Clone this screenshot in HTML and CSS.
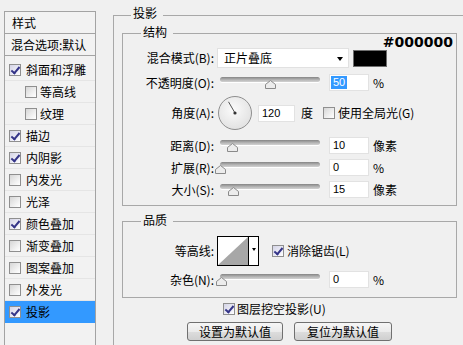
FILE: index.html
```html
<!DOCTYPE html>
<html lang="zh-CN">
<head>
<meta charset="utf-8">
<title>图层样式 - 投影</title>
<link rel="stylesheet" href="styles.css">
</head>
<body>
<div class="dialog">
  <aside class="styles-panel">
    <div class="panel-head">样式</div>
    <div class="panel-head blend">混合选项:默认</div>
    <ul class="fx-list">
      <li class="fx"><span class="cb on"></span><span class="fx-name">斜面和浮雕</span></li>
      <li class="fx sub"><span class="cb"></span><span class="fx-name">等高线</span></li>
      <li class="fx sub"><span class="cb"></span><span class="fx-name">纹理</span></li>
      <li class="fx"><span class="cb on"></span><span class="fx-name">描边</span></li>
      <li class="fx"><span class="cb on"></span><span class="fx-name">内阴影</span></li>
      <li class="fx"><span class="cb"></span><span class="fx-name">内发光</span></li>
      <li class="fx"><span class="cb"></span><span class="fx-name">光泽</span></li>
      <li class="fx"><span class="cb on"></span><span class="fx-name">颜色叠加</span></li>
      <li class="fx"><span class="cb"></span><span class="fx-name">渐变叠加</span></li>
      <li class="fx"><span class="cb"></span><span class="fx-name">图案叠加</span></li>
      <li class="fx"><span class="cb"></span><span class="fx-name">外发光</span></li>
      <li class="fx selected"><span class="cb on"></span><span class="fx-name">投影</span></li>
    </ul>
  </aside>

  <main class="content">
    <section class="group outer">
      <h2 class="legend">投影</h2>

      <section class="group inner structure">
        <h3 class="legend">结构</h3>
        <div class="hex">#000000</div>

        <div class="row r-blend">
          <span class="lbl">混合模式(B):</span>
          <div class="select"><span>正片叠底</span><span class="arrow"></span></div>
          <span class="swatch"></span>
        </div>

        <div class="row r-opacity">
          <span class="lbl">不透明度(O):</span>
          <div class="slider"><div class="track"></div><svg class="thumb" style="left:50px" width="11" height="9" viewBox="0 0 11 9"><path d="M0.5 8.5V4.5L5.5 0.5L10.5 4.5V8.5Z" fill="#ececec" stroke="#8a8a8a"/></svg></div>
          <span class="num"><span class="sel">50</span></span>
          <span class="unit">%</span>
        </div>

        <div class="row r-angle">
          <span class="lbl">角度(A):</span>
          <svg class="dial" width="34" height="34" viewBox="0 0 34 34">
            <defs>
              <radialGradient id="dg" cx="45%" cy="40%" r="60%">
                <stop offset="0" stop-color="#fbfbfb"/>
                <stop offset="1" stop-color="#e2e2e2"/>
              </radialGradient>
            </defs>
            <circle cx="17" cy="17" r="16.5" fill="url(#dg)" stroke="#8e8e8e"/>
            <line x1="17" y1="17" x2="10.5" y2="5.8" stroke="#555" stroke-width="1"/>
            <circle cx="17" cy="17" r="1.6" fill="#333"/>
          </svg>
          <span class="num angle">120</span>
          <span class="unit deg">度</span>
          <span class="cb global"></span>
          <span class="cb-text">使用全局光(G)</span>
        </div>

        <div class="row r-distance">
          <span class="lbl">距离(D):</span>
          <div class="slider"><div class="track"></div><svg class="thumb" style="left:12px" width="11" height="9" viewBox="0 0 11 9"><path d="M0.5 8.5V4.5L5.5 0.5L10.5 4.5V8.5Z" fill="#ececec" stroke="#8a8a8a"/></svg></div>
          <span class="num">10</span>
          <span class="unit">像素</span>
        </div>

        <div class="row r-spread">
          <span class="lbl">扩展(R):</span>
          <div class="slider"><div class="track"></div><svg class="thumb" style="left:0px" width="11" height="9" viewBox="0 0 11 9"><path d="M0.5 8.5V4.5L5.5 0.5L10.5 4.5V8.5Z" fill="#ececec" stroke="#8a8a8a"/></svg></div>
          <span class="num">0</span>
          <span class="unit">%</span>
        </div>

        <div class="row r-size">
          <span class="lbl">大小(S):</span>
          <div class="slider"><div class="track"></div><svg class="thumb" style="left:13px" width="11" height="9" viewBox="0 0 11 9"><path d="M0.5 8.5V4.5L5.5 0.5L10.5 4.5V8.5Z" fill="#ececec" stroke="#8a8a8a"/></svg></div>
          <span class="num">15</span>
          <span class="unit">像素</span>
        </div>
      </section>

      <section class="group inner quality">
        <h3 class="legend">品质</h3>

        <div class="row r-contour">
          <span class="lbl">等高线:</span>
          <div class="contour">
            <svg class="curve" width="30" height="28" viewBox="0 0 30 28"><polygon points="0,28 30,0 30,28" fill="#a7a7a7"/></svg>
            <span class="contour-drop"><span class="mini-arrow"></span></span>
          </div>
          <span class="cb on aa"></span>
          <span class="cb-text">消除锯齿(L)</span>
        </div>

        <div class="row r-noise">
          <span class="lbl">杂色(N):</span>
          <div class="slider"><div class="track"></div><svg class="thumb" style="left:1px" width="11" height="9" viewBox="0 0 11 9"><path d="M0.5 8.5V4.5L5.5 0.5L10.5 4.5V8.5Z" fill="#ececec" stroke="#8a8a8a"/></svg></div>
          <span class="num">0</span>
          <span class="unit">%</span>
        </div>
      </section>

      <div class="row r-knockout">
        <span class="cb on"></span>
        <span class="cb-text">图层挖空投影(U)</span>
      </div>

      <div class="buttons">
        <button class="btn btn-set">设置为默认值</button>
        <button class="btn btn-reset">复位为默认值</button>
      </div>
    </section>
  </main>
</div>
</body>
</html>
```
FILE: styles.css
```css
* { box-sizing: border-box; }

html, body {
  margin: 0;
  padding: 0;
}

body {
  width: 463px;
  height: 345px;
  overflow: hidden;
  background: #f0f0f0;
  color: #000;
  font-family: "Noto Sans CJK SC", "Noto Sans", sans-serif;
  font-size: 12px;
  line-height: 16px;
}

.dialog {
  display: flex;
  align-items: flex-start;
}

/* ---------- left panel ---------- */
.styles-panel {
  flex: none;
  width: 92px;
  height: 334px;
  margin: 11px 0 0 4px;
  border: 1px solid #a3a3a3;
  border-bottom: none;
  background: #f2f2f2;
}

.panel-head {
  height: 22px;
  display: flex;
  align-items: center;
  padding-left: 7px;
  border-bottom: 1px solid #a3a3a3;
}

.panel-head.blend {
  padding-left: 6px;
}

.fx-list {
  list-style: none;
  margin: 0;
  padding: 3px 0 0;
}

.fx {
  height: 22px;
  display: flex;
  align-items: center;
  padding-left: 4px;
  border-bottom: 1px solid #e5e5e5;
}

.fx .fx-name {
  margin-left: 5px;
}

.fx.sub {
  padding-left: 20px;
}

.fx.sub .fx-name {
  margin-left: 3px;
}

.fx.selected {
  background: #3399ff;
  border-bottom-color: #3399ff;
}

/* ---------- checkbox ---------- */
.cb {
  flex: none;
  position: relative;
  width: 12px;
  height: 12px;
  border: 1px solid #8f8f8f;
  background: linear-gradient(135deg, #d6d6d6 0%, #f4f4f4 70%, #ffffff 100%);
}

.cb.on {
  background: linear-gradient(135deg, #d4d4e6 0%, #f0f0f8 70%, #ffffff 100%);
}

.cb.on::after {
  content: "";
  position: absolute;
  left: 3px;
  top: 0px;
  width: 3px;
  height: 7px;
  border-right: 2px solid #343488;
  border-bottom: 2px solid #343488;
  transform: rotate(40deg);
}

.cb-text {
  margin-left: 3px;
  white-space: nowrap;
}

/* ---------- right content ---------- */
.content {
  flex: none;
  margin-left: 17px;
  margin-top: 15px;
}

.group {
  border: 1px solid #a8a8a8;
}

.group.outer {
  width: 350px;
  height: 330px;
  padding-left: 8px;
  border-bottom: none;
  border-right: none;
}

.legend {
  display: block;
  width: fit-content;
  height: 16px;
  margin: 0;
  padding: 0 6px 0 2px;
  font-size: 12px;
  font-weight: normal;
  line-height: 16px;
  background: #f0f0f0;
}

.outer > .legend {
  margin-top: -11px;
  margin-left: 9px;
}

.inner {
  width: 335px;
  position: relative;
}

.inner > .legend {
  margin-top: -10px;
  margin-left: 18px;
}

.structure {
  margin-top: 12px;
  padding-bottom: 7px;
}

.quality {
  margin-top: 15px;
  padding-bottom: 9px;
}

.hex {
  position: absolute;
  top: 1px;
  right: 3px;
  font-family: "DejaVu Sans", sans-serif;
  font-weight: bold;
  font-size: 14px;
  line-height: 14px;
}

.row {
  display: flex;
  align-items: center;
  white-space: nowrap;
}

.lbl {
  flex: none;
  width: 91px;
  text-align: right;
}

.r-blend   { margin-top: 8px; height: 20px; }
.r-opacity { margin-top: 6px; height: 17px; }
.r-angle   { margin-top: 5px; height: 34px; }
.r-distance{ margin-top: 7px; height: 17px; }
.r-spread  { margin-top: 5px; height: 17px; }
.r-size    { margin-top: 5px; height: 17px; }
.r-contour { margin-top: 8px; height: 30px; }
.r-noise   { margin-top: 5px; height: 17px; }

.select {
  flex: none;
  width: 132px;
  height: 20px;
  margin-left: 3px;
  padding: 0 5px 0 6px;
  display: flex;
  align-items: center;
  justify-content: space-between;
  background: #fff;
  border: 1px solid #e1e1e1;
}

.arrow {
  width: 0;
  height: 0;
  border-left: 3.5px solid transparent;
  border-right: 3.5px solid transparent;
  border-top: 4px solid #000;
  margin-top: 1px;
}

.swatch {
  flex: none;
  width: 34px;
  height: 17px;
  margin-left: 4px;
  background: #000;
  border: 1px solid #6e6e6e;
}

.slider {
  flex: none;
  position: relative;
  width: 106px;
  height: 13px;
  margin-left: 1px;
  padding-top: 1px;
}

.track {
  width: 100px;
  height: 5px;
  margin-left: 5px;
  border-radius: 3px;
  background: linear-gradient(#858585, #b9b9b9 60%, #d2d2d2);
  box-shadow: 0 1px 0 #ffffff;
}

.thumb {
  position: absolute;
  top: 4px;
  display: block;
}

.num {
  flex: none;
  width: 40px;
  height: 17px;
  margin-left: 8px;
  padding-left: 3px;
  background: #fff;
  border: 1px solid #e2e2e2;
  font-family: "Liberation Sans", Arial, sans-serif;
  font-size: 11px;
  line-height: 15px;
}

.sel {
  display: inline-block;
  margin-left: -2px;
  padding: 0 2px;
  background: #3399ff;
  color: #fff;
  line-height: 13px;
}

.unit {
  margin-left: 4px;
}

.dial {
  flex: none;
  margin-left: 4px;
  display: block;
}

.num.angle {
  width: 37px;
  margin-left: 6px;
}

.unit.deg {
  margin-left: 6px;
}

.cb.global {
  margin-left: 10px;
}

.contour {
  flex: none;
  display: flex;
  width: 42px;
  height: 30px;
  margin-left: 3px;
  border: 1px solid #000;
  background: #fff;
}

.curve {
  display: block;
}

.contour-drop {
  flex: none;
  width: 10px;
  border-left: 1px solid #000;
  display: flex;
  align-items: center;
  justify-content: center;
}

.mini-arrow {
  width: 0;
  height: 0;
  border-left: 2.5px solid transparent;
  border-right: 2.5px solid transparent;
  border-top: 3px solid #000;
  margin-top: -4px;
}

.cb.aa {
  margin-left: 13px;
}

.r-knockout {
  margin-top: 2px;
  height: 17px;
  padding-left: 101px;
}

.r-knockout .cb-text {
  margin-left: 2px;
}

.buttons {
  width: 335px;
  margin-top: 5px;
  display: flex;
  justify-content: center;
  gap: 11px;
}

.btn {
  height: 19px;
  padding: 0;
  border: 1px solid #707070;
  border-radius: 3px;
  background: linear-gradient(#f6f6f6, #ebebeb 50%, #dddddd 51%, #cfcfcf);
  font-family: "Noto Sans CJK SC", sans-serif;
  font-size: 12px;
  line-height: 17px;
  color: #000;
}

.btn-set { width: 96px; }
.btn-reset { width: 98px; }
```
